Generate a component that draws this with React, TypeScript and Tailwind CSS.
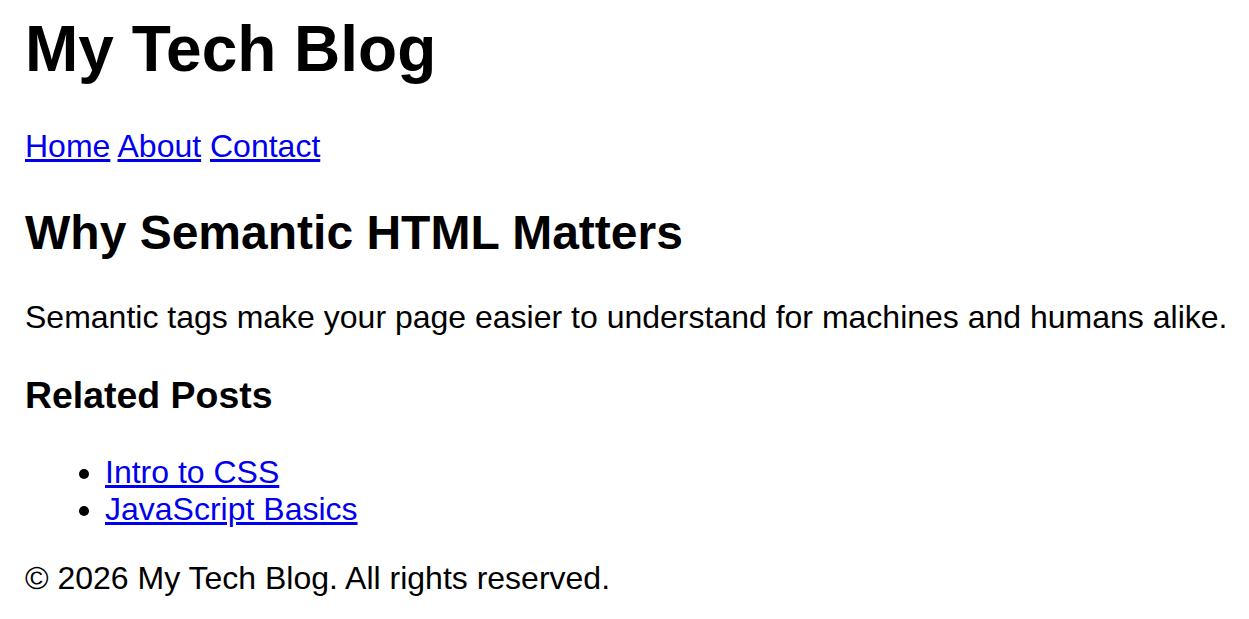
import React from "react";

export default function App() {
  return (
    <div className="min-h-screen bg-white pl-[25px] pr-0 pt-[13px] text-black" style={{ fontFamily: '"Liberation Sans", Arial, sans-serif' }}>
      <header>
        <h1 className="text-[64px] font-bold leading-[1.15] mb-[41px]">My Tech Blog</h1>
        <nav className="text-[32px] leading-[1.15]">
          <a href="#" className="text-[#0000ee] underline">Home</a>{" "}
          <a href="#" className="text-[#0000ee] underline">About</a>{" "}
          <a href="#" className="text-[#0000ee] underline">Contact</a>
        </nav>
      </header>
      <main>
        <article>
          <h2 className="text-[48px] font-bold leading-[1.15] mt-[41px] mb-[38px]">Why Semantic HTML Matters</h2>
          <p className="text-[32px] leading-[1.15] mb-[39px] whitespace-nowrap">Semantic tags make your page easier to understand for machines and humans alike.</p>
        </article>
        <aside>
          <h3 className="text-[37.44px] font-bold leading-[1.15] mb-[37px]">Related Posts</h3>
          <ul className="list-disc pl-[80px] text-[32px] leading-[1.15] mb-[32px]">
            <li><a href="#" className="text-[#0000ee] underline">Intro to CSS</a></li>
            <li><a href="#" className="text-[#0000ee] underline">JavaScript Basics</a></li>
          </ul>
        </aside>
      </main>
      <footer>
        <p className="text-[32px] leading-[1.15]">© 2026 My Tech Blog. All rights reserved.</p>
      </footer>
    </div>
  );
}
